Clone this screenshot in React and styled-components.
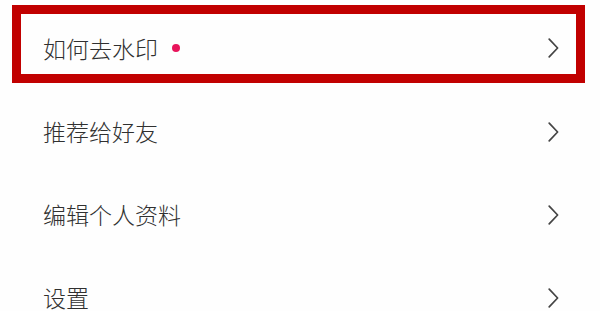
import React from "react";
import styled, { createGlobalStyle } from "styled-components";

const GlobalStyle = createGlobalStyle`
  html, body { margin: 0; padding: 0; background: #ffffff; }
  body { font-family: "Noto Sans CJK SC", "Noto Sans", sans-serif; }
`;

const Page = styled.div`
  width: 600px;
  height: 311px;
  overflow: hidden;
  background: #fefefe;
  padding-top: 5px;
  box-sizing: border-box;
  display: flex;
  flex-direction: column;
`;

const Row = styled.div`
  display: flex;
  align-items: center;
  justify-content: space-between;
  box-sizing: border-box;
  flex: none;
  ${({ $highlight }) =>
    $highlight
      ? `
    height: 78px;
    margin: 0 15px 7px 12px;
    border: 9px solid #c10000;
    padding: 8px 17px 0 22px;
  `
      : `
    height: 83px;
    padding: 0 41px 0 43px;
  `}
`;

const Label = styled.div`
  display: flex;
  align-items: center;
  font-size: 23px;
  font-weight: 300;
  line-height: 1;
  color: #303030;
  letter-spacing: 0;
`;

const Dot = styled.span`
  width: 8px;
  height: 8px;
  border-radius: 50%;
  background: #e8155b;
  margin-left: 14px;
  margin-top: -1px;
`;

const Chevron = () => (
  <svg width="11" height="20" viewBox="0 0 11 20" fill="none">
    <path d="M1.2 1.2 L9.6 10 L1.2 18.8" stroke="#444" strokeWidth="1.7" strokeLinecap="round" strokeLinejoin="round" />
  </svg>
);

const items = [
  { label: "如何去水印", dot: true, highlight: true },
  { label: "推荐给好友" },
  { label: "编辑个人资料" },
  { label: "设置" },
];

export default function App() {
  return (
    <>
      <GlobalStyle />
      <Page>
        {items.map((it) => (
          <Row key={it.label} $highlight={it.highlight}>
            <Label>
              {it.label}
              {it.dot && <Dot />}
            </Label>
            <Chevron />
          </Row>
        ))}
      </Page>
    </>
  );
}
